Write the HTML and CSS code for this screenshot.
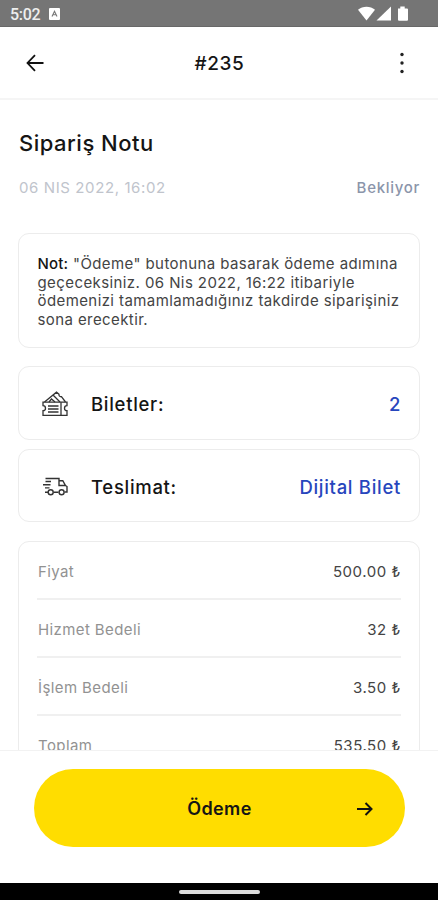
FILE: index.html
```html
<!DOCTYPE html>
<html lang="tr">
<head>
<meta charset="utf-8">
<title>Sipariş #235</title>
<link rel="stylesheet" href="styles.css">
</head>
<body>
<div class="screen">
  <div class="status">
    <span class="clock">5:02</span>
    <svg class="app" width="11" height="12" viewBox="0 0 11 12"><rect width="11" height="12" rx="1" fill="#fff"/><path d="M3 8.5 5.5 3.2 8 8.5M4 6.800h3" fill="none" stroke="#777" stroke-width="1.1"/></svg>
    <svg class="signals" width="50" height="16" viewBox="0 0 50 16" fill="#fff"><path d="M0 3.7C4.6-.2 12.4-.2 17 3.7L8.5 14.5z"/><path d="M18.5 14.5 33 .5v14z"/><path d="M40 2.5h2.3V.5h4.4v2H49a1 1 0 0 1 1 1v10.300a1 1 0 0 1-1 1h-8a1 1 0 0 1-1-1z"/></svg>
  </div>
  <header class="header">
    <svg width="18" height="18" viewBox="0 0 18 18" fill="none" stroke="#111" stroke-width="1.8"><path d="M17.500 9H1.500M9 1.200 1.500 9 9 16.800"/></svg>
    <h1>#235</h1>
    <svg width="18" height="22" viewBox="0 0 18 22" fill="#222"><circle cx="9" cy="2.500" r="1.700"/><circle cx="9" cy="11" r="1.700"/><circle cx="9" cy="19.500" r="1.700"/></svg>
  </header>
  <main class="content">
    <h2>Sipariş Notu</h2>
    <div class="meta"><span class="date">06 NIS 2022, 16:02</span><span class="state">Bekliyor</span></div>
    <p class="card note"><b>Not:</b> "Ödeme" butonuna basarak ödeme adımına<br>geçeceksiniz. 06 Nis 2022, 16:22 itibariyle<br>ödemenizi tamamlamadığınız takdirde siparişiniz<br>sona erecektir.</p>
    <div class="card item">
      <svg width="26" height="26" viewBox="0 0 26 26" fill="none" stroke="#333" stroke-width="1.300"><path d="M1 11.200h24v3.500a2.200 2.200 0 0 0 0 5V24.400H1v-4.700a2.200 2.200 0 0 0 0-5z"/><path d="M19 11.200v13.200M6 15h10.500M6 18h10.500M6 21h10.500"/><path d="M2.500 11 14.500 1.200l2.500 2c-.4 1.500.8 2.700 2.500 2.500L23.500 11M7 11l2.500-3 3.500 3M11.500 4.500 18 11"/></svg>
      <span class="label">Biletler:</span><span class="value">2</span>
    </div>
    <div class="card item delivery">
      <svg width="26" height="26" viewBox="0 0 26 26" fill="none" stroke="#333" stroke-width="1.400"><path d="M3.500 4.500H17v2.200h3.800l2.700 4.800 1.500 1v5.500h-2.500M16.500 18.300h-5M6 18.300H3M17 6.700v4.800h6.500M3.500 7.500H9M1 10.700h7.500M3 13.900h4.500"/><circle cx="8.700" cy="18.300" r="2.500"/><circle cx="19.600" cy="18.300" r="2.500"/></svg>
      <span class="label">Teslimat:</span><span class="value">Dijital Bilet</span>
    </div>
    <div class="card prices">
      <div class="row"><span>Fiyat</span><b>500.00 ₺</b></div>
      <div class="row"><span>Hizmet Bedeli</span><b>32 ₺</b></div>
      <div class="row"><span>İşlem Bedeli</span><b>3.50 ₺</b></div>
      <div class="row"><span>Toplam</span><b>535.50 ₺</b></div>
    </div>
  </main>
  <footer class="footer">
    <button class="pay"><span></span><span>Ödeme</span><svg width="16" height="14" viewBox="0 0 16 14" fill="none" stroke="#111" stroke-width="2"><path d="M0 7h14M8.500 1l6 6-6 6"/></svg></button>
  </footer>
  <div class="nav"><i></i></div>
</div>
</body>
</html>
```
FILE: styles.css
```css
* { box-sizing: border-box; }
body { margin: 0; font-family: Inter, "Liberation Sans", sans-serif; background: #fff; color: #151515; }
h1, h2, p { margin: 0; }
.screen { width: 438px; height: 900px; display: flex; flex-direction: column; overflow: hidden; }
.status { height: 27px; flex: none; background: #757575; border-bottom: 1px solid #686868; display: flex; align-items: center; padding: 2px 30px 0 10px; color: #fff; }
.clock { font: 500 16px/20px Roboto, sans-serif; letter-spacing: -.3px; width: 39px; color: #eee; padding-top: 1px; }
.signals { margin-left: auto; }
.header { height: 73px; flex: none; display: flex; align-items: center; justify-content: space-between; padding: 0 27px 0 26px; border-bottom: 2px solid #f5f5f5; }
.header h1 { font-size: 19px; font-weight: 500; letter-spacing: .6px; line-height: 24px; padding: 3px 0 0 2px; }
.content { flex: 1; min-height: 0; overflow: hidden; padding: 29px 18px 0; }
h2 { font-size: 22px; line-height: 28px; font-weight: 500; letter-spacing: .5px; padding-left: 1px; }
.meta { display: flex; justify-content: space-between; font-size: 15px; line-height: 20px; margin: 21px 0 35px; padding-left: 1px; letter-spacing: .6px; }
.date { color: #c0c4cc; }
.state { color: #8b95aa; font-weight: 500; letter-spacing: .7px; }
.card { border: 1.500px solid #ececec; border-radius: 11px; }
.note { height: 115px; padding: 21px 18px 0 18.500px; font-size: 15px; line-height: 18.700px; letter-spacing: .41px; color: #444; white-space: nowrap; }
.note b { font-weight: 500; color: #151515; letter-spacing: .2px; }
.item { margin-top: 18px; height: 74px; display: flex; align-items: center; padding: 2px 18px 0 23px; font-size: 18.500px; font-weight: 500; letter-spacing: .7px; }
.delivery { margin-top: 9px; height: 73px; padding-top: 3px; }
.label { margin-left: 23px; }
.value { margin-left: auto; color: #2746bd; }
.prices { margin-top: 19px; padding: 0 18px; height: 260px; }
.row { height: 58px; display: flex; align-items: center; justify-content: space-between; border-bottom: 2px solid #f0f0f0; font-size: 15px; color: #929292; letter-spacing: .4px; padding: 3px 0 0 1px; }
.row b { font-weight: 400; color: #444; letter-spacing: .55px; }
.footer { height: 133px; flex: none; border-top: 1px solid #f2f2f2; padding: 18px 33px 0 34px; background: #fff; }
.pay { width: 100%; height: 78px; border: 0; border-radius: 39px; background: #ffdd00; color: #151515; font: 600 18px/24px Inter, sans-serif; letter-spacing: .35px; display: grid; grid-template-columns: 16px 1fr 16px; align-items: center; padding: 1px 32px 0; }
.nav { height: 17px; flex: none; background: #000; display: flex; justify-content: center; padding-top: 7px; }
.nav i { width: 81px; height: 4px; border-radius: 2px; background: #ddd; }
```
